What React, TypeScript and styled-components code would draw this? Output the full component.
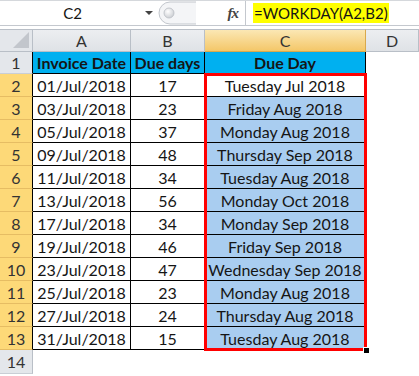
import React from 'react';
import styled, { createGlobalStyle } from 'styled-components';

type Row = [string, number, string];

const rows: Row[] = [
  ['01/Jul/2018', 17, 'Tuesday Jul 2018'],
  ['03/Jul/2018', 23, 'Friday Aug 2018'],
  ['05/Jul/2018', 37, 'Monday Aug 2018'],
  ['09/Jul/2018', 48, 'Thursday Sep 2018'],
  ['11/Jul/2018', 34, 'Tuesday Aug 2018'],
  ['13/Jul/2018', 56, 'Monday Oct 2018'],
  ['17/Jul/2018', 34, 'Monday Sep 2018'],
  ['19/Jul/2018', 46, 'Friday Sep 2018'],
  ['23/Jul/2018', 47, 'Wednesday Sep 2018'],
  ['25/Jul/2018', 23, 'Monday Aug 2018'],
  ['27/Jul/2018', 24, 'Thursday Aug 2018'],
  ['31/Jul/2018', 15, 'Tuesday Aug 2018'],
];

const columns = ['A', 'B', 'C', 'D'];

// grid lines: row 1 = column headers, row 2 = sheet row 1, ... ; col 1 = row headers
const App = (): JSX.Element => {
  return (
    <Page>
      <GlobalStyle />
      <FormulaBar>
        <NameBox>
          <NameText>C2</NameText>
          <DropArrow />
        </NameBox>
        <Splitter width='40' height='24' viewBox='0 0 40 24'>
          <defs>
            <radialGradient id='knob' cx='0.4' cy='0.35' r='0.7'>
              <stop offset='0' stopColor='#ffffff' />
              <stop offset='1' stopColor='#c9ccd1' />
            </radialGradient>
          </defs>
          <path d='M40 1 H14 A11 11 0 0 0 14 23 H40' fill='#f4f5f7' stroke='#c3c7cd' />
          <circle cx='13' cy='12' r='5' fill='url(#knob)' stroke='#b9bdc3' strokeWidth='0.8' />
        </Splitter>
        <FxLabel>fx</FxLabel>
        <FormulaInput>
          <Highlight>=WORKDAY(A2,B2)</Highlight>
        </FormulaInput>
      </FormulaBar>
      <BarGap />
      <Sheet>
        <Corner $r={1} $c={1}>
          <svg width='16' height='16' viewBox='0 0 16 16'>
            <polygon points='16,0 16,16 0,16' fill='#c2c6cc' />
          </svg>
        </Corner>
        {columns.map((col, c) => (
          <ColHead key={col} $r={1} $c={c + 2} $active={col === 'C'}>
            {col}
          </ColHead>
        ))}

        <RowHead $r={2} $c={1}>
          1
        </RowHead>
        <Cell $r={2} $c={2} $fill='#00b0f0' $bold $bordered>
          Invoice Date
        </Cell>
        <Cell $r={2} $c={3} $fill='#00b0f0' $bold $bordered>
          Due days
        </Cell>
        <Cell $r={2} $c={4} $fill='#00b0f0' $bold $bordered>
          Due Day
        </Cell>

        {rows.map(([date, days, due], i) => (
          <React.Fragment key={date}>
            <RowHead $r={i + 3} $c={1} $active>
              {i + 2}
            </RowHead>
            <Cell $r={i + 3} $c={2} $bordered>
              {date}
            </Cell>
            <Cell $r={i + 3} $c={3} $bordered>
              {days}
            </Cell>
            <Cell $r={i + 3} $c={4} $bordered $fill={i === 0 ? '#ffffff' : '#a9cdf0'}>
              {due}
            </Cell>
          </React.Fragment>
        ))}

        <Selection>
          <FillHandle />
        </Selection>
      </Sheet>
      <TailRow>
        <SpareHead>14</SpareHead>
      </TailRow>
    </Page>
  );
};

const GlobalStyle = createGlobalStyle`
  html, body {
    margin: 0;
    padding: 0;
    background: #ffffff;
  }
  body {
    font-family: Lato, 'Open Sans', 'Liberation Sans', sans-serif;
    color: #151515;
  }
`;

const Page = styled.div`
  width: 419px;
  height: 376px;
  display: flex;
  flex-direction: column;
  background: #ffffff;
`;

const FormulaBar = styled.div`
  flex: none;
  height: 26px;
  box-sizing: border-box;
  display: flex;
  align-items: stretch;
  border-top: 1px solid #d5d8dc;
  border-bottom: 1px solid #c4c8ce;
  background: #ffffff;
`;

const NameBox = styled.div`
  width: 156px;
  display: flex;
  align-items: center;
`;

const NameText = styled.span`
  flex: 1;
  text-align: center;
  font-size: 15px;
`;

const DropArrow = styled.span`
  width: 0;
  height: 0;
  margin-right: 3px;
  border-left: 4px solid transparent;
  border-right: 4px solid transparent;
  border-top: 4px solid #444;
`;

const Splitter = styled.svg`
  flex-shrink: 0;
`;

const FxLabel = styled.div`
  width: 49px;
  display: flex;
  align-items: center;
  justify-content: flex-end;
  padding-right: 7px;
  box-sizing: border-box;
  font-family: 'Liberation Serif', serif;
  font-style: italic;
  font-weight: bold;
  font-size: 15px;
  color: #444;
  letter-spacing: -1px;
`;

const FormulaInput = styled.div`
  flex: 1;
  display: flex;
  align-items: center;
  padding-left: 7px;
  border-left: 1px solid #c4c8ce;
`;

const Highlight = styled.span`
  background: #ffff00;
  font-size: 15px;
  line-height: 20px;
  padding: 0 1px;
`;

const BarGap = styled.div`
  flex: none;
  height: 3px;
  background: #ffffff;
`;

const Sheet = styled.div`
  flex: none;
  display: grid;
  grid-template-columns: 33px 98px 74px 161px 1fr;
  grid-template-rows: 23px 22px repeat(12, 23px);
  font-size: 16px;
`;

const Placed = styled.div<{ $r: number; $c: number }>`
  grid-row: ${(p) => p.$r};
  grid-column: ${(p) => p.$c};
  box-sizing: border-box;
  display: flex;
  align-items: center;
  justify-content: center;
`;

const Corner = styled(Placed)`
  background: #e4e7eb;
  border-top: 1px solid #b9bfc7;
  border-right: 1px solid #b9bfc7;
  border-bottom: 1px solid #b9bfc7;
  align-items: flex-end;
  justify-content: flex-end;
  padding: 0 3px 3px 0;
`;

const ColHead = styled(Placed)<{ $active?: boolean }>`
  color: #333;
  background: ${(p) =>
    p.$active ? 'linear-gradient(#fbe7b4, #f4c768)' : 'linear-gradient(#eceef1, #dfe2e6)'};
  border-top: 1px solid #b9bfc7;
  border-right: 1px solid ${(p) => (p.$active ? '#d9a94d' : '#b9bfc7')};
  border-bottom: 1px solid ${(p) => (p.$active ? '#d9a94d' : '#b9bfc7')};
`;

const RowHead = styled(Placed)<{ $active?: boolean }>`
  color: #333;
  background: ${(p) => (p.$active ? '#fdd978' : '#e4e7eb')};
  border-right: 1px solid #000;
  border-bottom: 1px solid ${(p) => (p.$active ? '#e6bd63' : '#c9ced5')};
`;

const TailRow = styled.div`
  flex: none;
  display: flex;
  height: 24px;
  font-size: 16px;
`;

const SpareHead = styled.div`
  width: 33px;
  box-sizing: border-box;
  display: flex;
  align-items: center;
  justify-content: center;
  color: #333;
  background: #e4e7eb;
  border-right: 1px solid #b9bfc7;
  border-bottom: 1px solid #c9ced5;
`;

const Cell = styled(Placed)<{ $fill?: string; $bold?: boolean; $bordered?: boolean }>`
  white-space: nowrap;
  overflow: hidden;
  background: ${(p) => p.$fill || '#ffffff'};
  font-weight: ${(p) => (p.$bold ? 700 : 400)};
  border-right: 1px solid ${(p) => (p.$bordered ? '#000' : 'transparent')};
  border-bottom: 1px solid ${(p) => (p.$bordered ? '#000' : 'transparent')};
`;

const Selection = styled.div`
  grid-column: 4;
  grid-row: 3 / 15;
  margin: -1px -1px -1px -1px;
  border: 3px solid #ff0000;
  position: relative;
  pointer-events: none;
  z-index: 1;
`;

const FillHandle = styled.div`
  position: absolute;
  right: -5px;
  bottom: -5px;
  width: 5px;
  height: 5px;
  background: #000;
  border-top: 1px solid #fff;
  border-left: 1px solid #fff;
`;

export default App;
